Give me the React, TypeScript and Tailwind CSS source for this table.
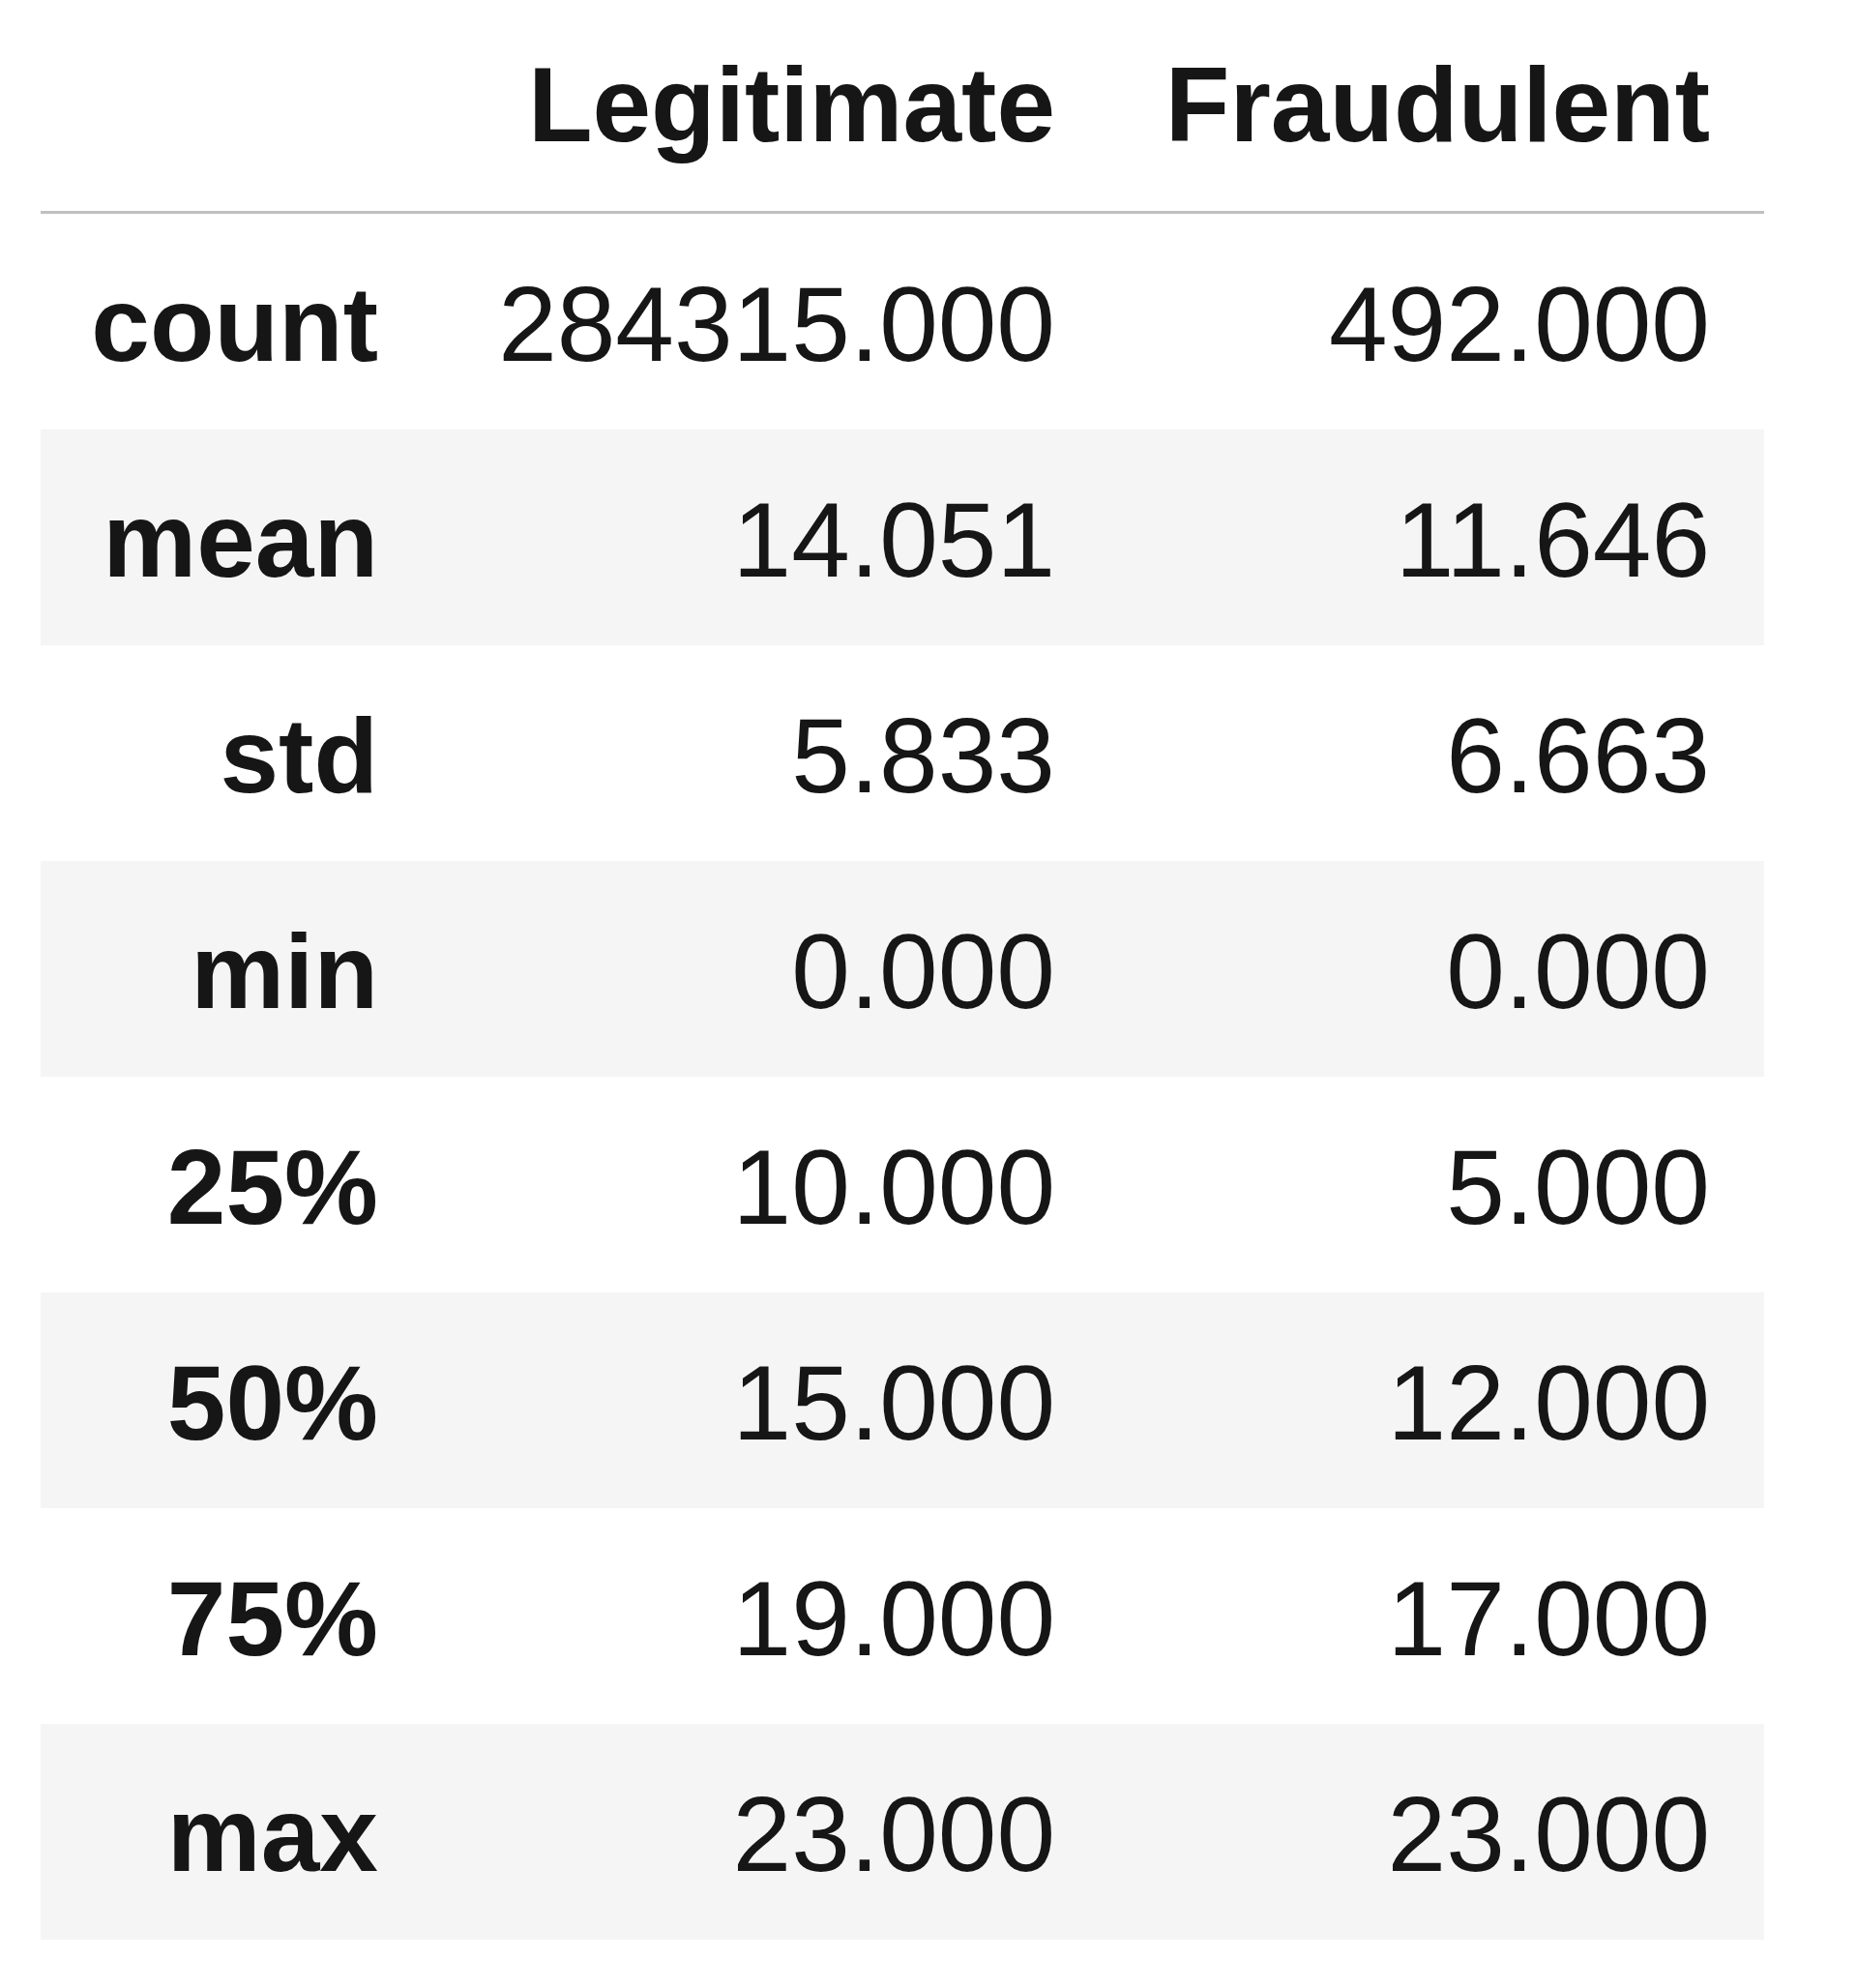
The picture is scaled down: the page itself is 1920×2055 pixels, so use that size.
import React from 'react'

const ROWS = [
  { label: 'count', legit: '284315.000', fraud: '492.000' },
  { label: 'mean', legit: '14.051', fraud: '11.646' },
  { label: 'std', legit: '5.833', fraud: '6.663' },
  { label: 'min', legit: '0.000', fraud: '0.000' },
  { label: '25%', legit: '10.000', fraud: '5.000' },
  { label: '50%', legit: '15.000', fraud: '12.000' },
  { label: '75%', legit: '19.000', fraud: '17.000' },
  { label: 'max', legit: '23.000', fraud: '23.000' },
]

export default function App() {
  return (
    <div className="min-h-[2055px] bg-white pl-[42px] font-['Liberation_Sans',Arial,sans-serif] text-[109px] leading-[1.15] text-[#161616]">
      <table className="w-[1782px] table-fixed border-collapse">
        <colgroup>
          <col className="w-[401px]" />
          <col className="w-[700px]" />
          <col className="w-[681px]" />
        </colgroup>
        <thead>
          <tr className="h-[219px] border-b-[3px] border-[#c0c0c0]">
            <th className="pr-[52px] text-right align-middle font-bold"></th>
            <th className="pr-[52px] text-right align-middle font-bold">Legitimate</th>
            <th className="pr-[56px] text-right align-middle font-bold">Fraudulent</th>
          </tr>
        </thead>
        <tbody>
          {ROWS.map((r, i) => (
            <tr
              key={r.label}
              className={`${i === 0 ? 'h-[225px]' : 'h-[223px]'} ${i % 2 === 1 ? 'bg-[#f5f5f5]' : 'bg-white'}`}
            >
              <th className="pr-[52px] pt-[6px] text-right align-middle font-bold">{r.label}</th>
              <td className="pr-[52px] pt-[6px] text-right align-middle">{r.legit}</td>
              <td className="pr-[56px] pt-[6px] text-right align-middle">{r.fraud}</td>
            </tr>
          ))}
        </tbody>
      </table>
    </div>
  )
}
